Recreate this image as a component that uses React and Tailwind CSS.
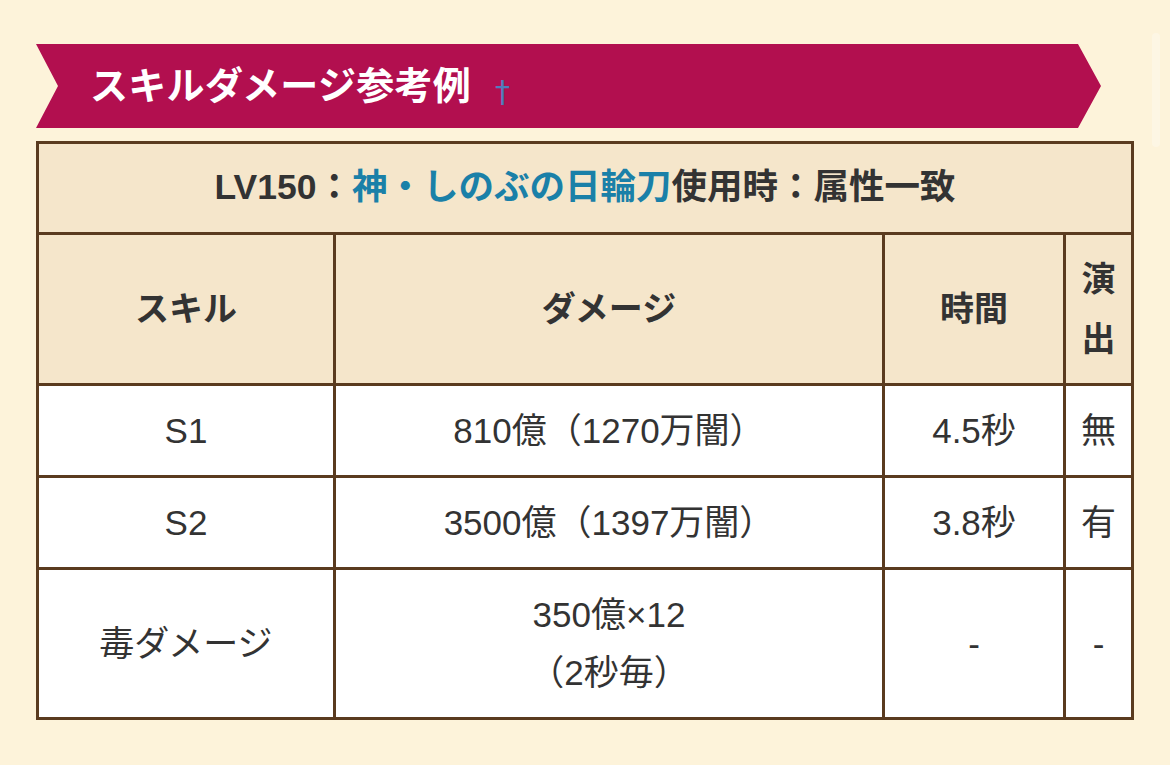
export default function App() {
  const font = "font-['Liberation_Sans','Noto_Sans_CJK_JP',sans-serif]";
  const head = "bg-[#f5e6cb] flex items-center justify-center text-center font-bold text-[34px] text-[#333333]";
  const cell = "bg-white flex items-center justify-center text-center text-[35px] text-[#333333] leading-[58px]";
  return (
    <div className={`relative w-[1170px] min-h-[765px] bg-[#fdf3da] ${font}`}>
      <div className="pt-[44px] pl-[36px] w-[1134px] pb-[45px]">
        <div className="w-[1065px] h-[84px] bg-[#b20f4f] [clip-path:polygon(0_0,1042px_0,100%_50%,1042px_100%,0_100%,22px_50%)] flex items-center pl-[54px]">
          <span className="text-white font-bold text-[38px] leading-none tracking-[0.3px]">スキルダメージ参考例</span>
          <span className="ml-[24px] mt-[12px] text-[#4f7dbb] text-[30px] leading-none font-['DejaVu_Sans',sans-serif]">†</span>
        </div>
        <div className="mt-[13px] grid grid-cols-[294px_546px_178px_65px] grid-rows-[88px_148px_89px_89px_147px] gap-[3px] p-[3px] bg-[#5a3b1f] w-[1098px]">
          <div className={`${head} col-span-4 text-[35.5px]`}>
            <span>LV150：<span className="text-[#1a80a8]">神・しのぶの日輪刀</span>使用時：属性一致</span>
          </div>
          <div className={head}>スキル</div>
          <div className={head}>ダメージ</div>
          <div className={head}>時間</div>
          <div className={`${head} leading-[60px] px-[14px]`}>演出</div>

          <div className={cell}>S1</div>
          <div className={cell}>810億（1270万闇）</div>
          <div className={cell}>4.5秒</div>
          <div className={cell}>無</div>

          <div className={cell}>S2</div>
          <div className={cell}>3500億（1397万闇）</div>
          <div className={cell}>3.8秒</div>
          <div className={cell}>有</div>

          <div className={cell}>毒ダメージ</div>
          <div className={`${cell} flex-col`}>
            <span>350億×12</span>
            <span>（2秒毎）</span>
          </div>
          <div className={cell}>-</div>
          <div className={cell}>-</div>
        </div>
      </div>
      <div className="absolute left-[1152px] top-[33px] w-[8px] h-[114px] rounded-full bg-[#fdf6e4]" />
    </div>
  );
}
